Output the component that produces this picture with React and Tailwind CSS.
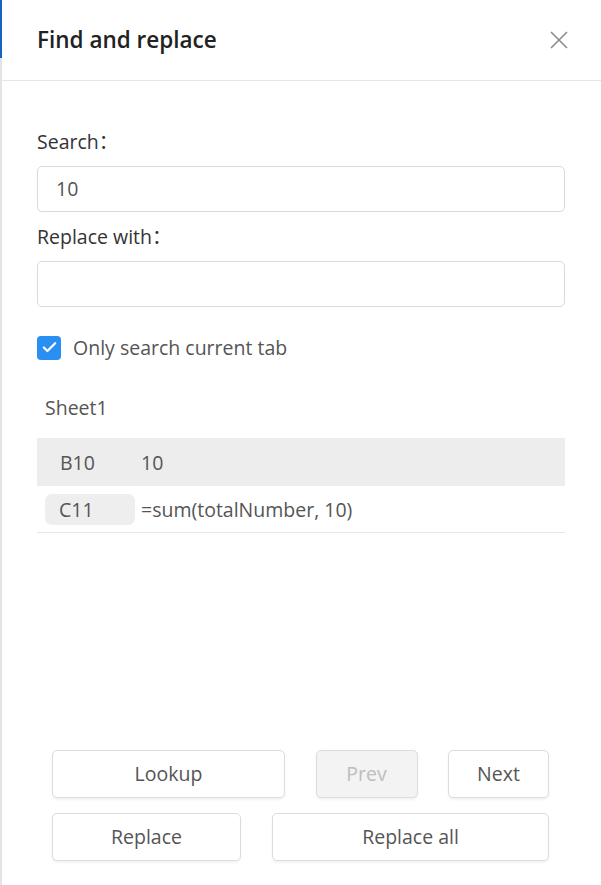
import { Check } from "lucide-react";

function Btn({ children, className = "", disabled = false }) {
  return (
    <button
      className={`h-[48px] rounded-[5px] border border-[#dcdcdc] text-[19.5px] shadow-[0_2px_3px_rgba(0,0,0,0.05)] ${
        disabled ? "bg-[#f3f3f3] text-[#bdbdbd]" : "bg-white text-[#555]"
      } ${className}`}
    >
      {children}
    </button>
  );
}

export default function App() {
  return (
    <div
      className="flex w-[601px] h-[885px] bg-white text-[#333]"
      style={{ fontFamily: '"Open Sans", "Noto Sans", "Noto Sans CJK SC", sans-serif' }}
    >
      {/* left edge strip */}
      <div className="flex flex-col w-[2px] shrink-0">
        <div className="h-[58px] bg-[#1565c0]" />
        <div className="flex-1 bg-[#e4e4e4]" />
      </div>

      <div className="flex-1 flex flex-col">
        {/* header */}
        <div className="h-[81px] flex items-center justify-between pl-[35px] pr-[32px] border-b border-[#e6e6e6]">
          <h2 className="text-[22.5px] font-semibold text-[#222]">Find and replace</h2>
          <svg width="20" height="20" viewBox="0 0 20 20" className="text-[#8a8a8a]">
            <path d="M2 2 L18 18 M18 2 L2 18" stroke="currentColor" strokeWidth="1.6" fill="none" />
          </svg>
        </div>

        <div className="flex-1 flex flex-col pl-[35px] pr-[36px]">
          <label className="mt-[49px] text-[19.5px] leading-[24px] text-[#333]">Search：</label>
          <div className="mt-[12px] h-[46px] rounded-[5px] border border-[#dadada] flex items-center pl-[18px] text-[19.5px] text-[#555]">
            10
          </div>
          <label className="mt-[13px] text-[19.5px] leading-[24px] text-[#333]">Replace with：</label>
          <div className="mt-[12px] h-[46px] rounded-[5px] border border-[#dadada]" />

          <div className="mt-[26px] flex items-center gap-[12px]">
            <div className="w-[24px] h-[24px] rounded-[4px] bg-[#2a8ff2] flex items-center justify-center">
              <Check size={17} strokeWidth={3.2} className="text-white" />
            </div>
            <span className="text-[19.5px] text-[#555]">Only search current tab</span>
          </div>

          <div className="mt-[34px] pl-[8px] text-[19.5px] text-[#555] leading-[24px]">Sheet1</div>

          <div className="mt-[18px] flex flex-col">
            <div className="h-[48px] bg-[#ededed] flex items-center text-[19.5px] text-[#555]">
              <span className="w-[104px] pl-[23px]">B10</span>
              <span>10</span>
            </div>
            <div className="h-[47px] flex items-center border-b border-[#e8e8e8] text-[19.5px] text-[#555]">
              <span className="ml-[8px] w-[90px] h-[31px] rounded-[7px] bg-[#eeeeee] flex items-center pl-[14px]">C11</span>
              <span className="ml-[6px]">=sum(totalNumber, 10)</span>
            </div>
          </div>

          <div className="mt-auto mb-[24px] ml-[15px] w-[497px] flex flex-col gap-[15px]">
            <div className="flex justify-between">
              <Btn className="w-[233px]">Lookup</Btn>
              <Btn className="w-[102px]" disabled>
                Prev
              </Btn>
              <Btn className="w-[101px]">Next</Btn>
            </div>
            <div className="flex justify-between">
              <Btn className="w-[189px]">Replace</Btn>
              <Btn className="w-[277px]">Replace all</Btn>
            </div>
          </div>
        </div>
      </div>
    </div>
  );
}
